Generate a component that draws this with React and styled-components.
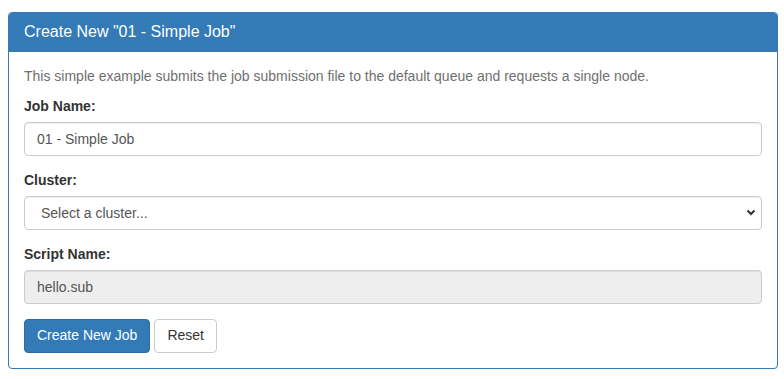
import React from "react";
import styled, { createGlobalStyle } from "styled-components";

const GlobalStyle = createGlobalStyle`
  * { box-sizing: border-box; }
  body {
    margin: 0;
    font-family: "Liberation Sans", Arial, sans-serif;
    font-size: 14px;
    line-height: 1.42857;
    color: #333;
    background: #fff;
  }
`;

const Page = styled.div`
  padding: 12px 6px 0 8px;
`;

const Panel = styled.div`
  border: 1px solid #337ab7;
  border-radius: 4px;
  background: #fff;
  box-shadow: 0 1px 1px rgba(0, 0, 0, 0.05);
`;

const PanelHeading = styled.div`
  background: #337ab7;
  color: #fff;
  padding: 10px 15px;
  border-bottom: 1px solid #337ab7;
  border-radius: 3px 3px 0 0;
`;

const PanelTitle = styled.h3`
  margin: 0;
  font-size: 16px;
  font-weight: 400;
  line-height: 1.1;
`;

const PanelBody = styled.div`
  padding: 15px;
`;

const Description = styled.p`
  margin: 0 0 10px;
  color: #6f6f6f;
`;

const FormGroup = styled.div`
  margin-bottom: ${(p) => (p.$last ? "0" : "15px")};
`;

const Label = styled.label`
  display: inline-block;
  margin-bottom: 5px;
  font-weight: 700;
`;

const Input = styled.input`
  display: block;
  width: 100%;
  height: 34px;
  padding: 6px 12px;
  font-family: inherit;
  font-size: 14px;
  color: #555;
  background: ${(p) => (p.readOnly ? "#eee" : "#fff")};
  border: 1px solid #ccc;
  border-radius: 4px;
  box-shadow: inset 0 1px 1px rgba(0, 0, 0, 0.075);
  outline: none;
`;

const Select = styled.select`
  display: block;
  width: 100%;
  height: 34px;
  padding: 6px 12px 6px 16px;
  font-family: inherit;
  font-size: 14px;
  color: #555;
  background: #fff url("data:image/svg+xml;utf8,<svg xmlns='http://www.w3.org/2000/svg' width='10' height='7' viewBox='0 0 10 7'><path d='M1.5 1.5 L5 5 L8.5 1.5' fill='none' stroke='%23333' stroke-width='2'/></svg>") no-repeat right 5px center;
  border: 1px solid #ccc;
  border-radius: 4px;
  box-shadow: inset 0 1px 1px rgba(0, 0, 0, 0.075);
  appearance: none;
  outline: none;
`;

const Actions = styled.div`
  display: flex;
  gap: 4px;
`;

const Button = styled.button`
  height: 34px;
  padding: 6px 12px;
  font-family: inherit;
  font-size: 14px;
  line-height: 1.42857;
  border-radius: 4px;
  border: 1px solid ${(p) => (p.$primary ? "#2e6da4" : "#ccc")};
  background: ${(p) => (p.$primary ? "#337ab7" : "#fff")};
  color: ${(p) => (p.$primary ? "#fff" : "#333")};
  cursor: pointer;
`;

export default function App() {
  return (
    <Page>
      <GlobalStyle />
      <Panel>
        <PanelHeading>
          <PanelTitle>Create New "01 - Simple Job"</PanelTitle>
        </PanelHeading>
        <PanelBody>
          <Description>
            This simple example submits the job submission file to the default queue and requests a single node.
          </Description>
          <FormGroup>
            <Label>Job Name:</Label>
            <Input defaultValue="01 - Simple Job" />
          </FormGroup>
          <FormGroup>
            <Label>Cluster:</Label>
            <Select defaultValue="">
              <option value="">Select a cluster...</option>
            </Select>
          </FormGroup>
          <FormGroup>
            <Label>Script Name:</Label>
            <Input readOnly defaultValue="hello.sub" />
          </FormGroup>
          <Actions>
            <Button $primary>Create New Job</Button>
            <Button>Reset</Button>
          </Actions>
        </PanelBody>
      </Panel>
    </Page>
  );
}
